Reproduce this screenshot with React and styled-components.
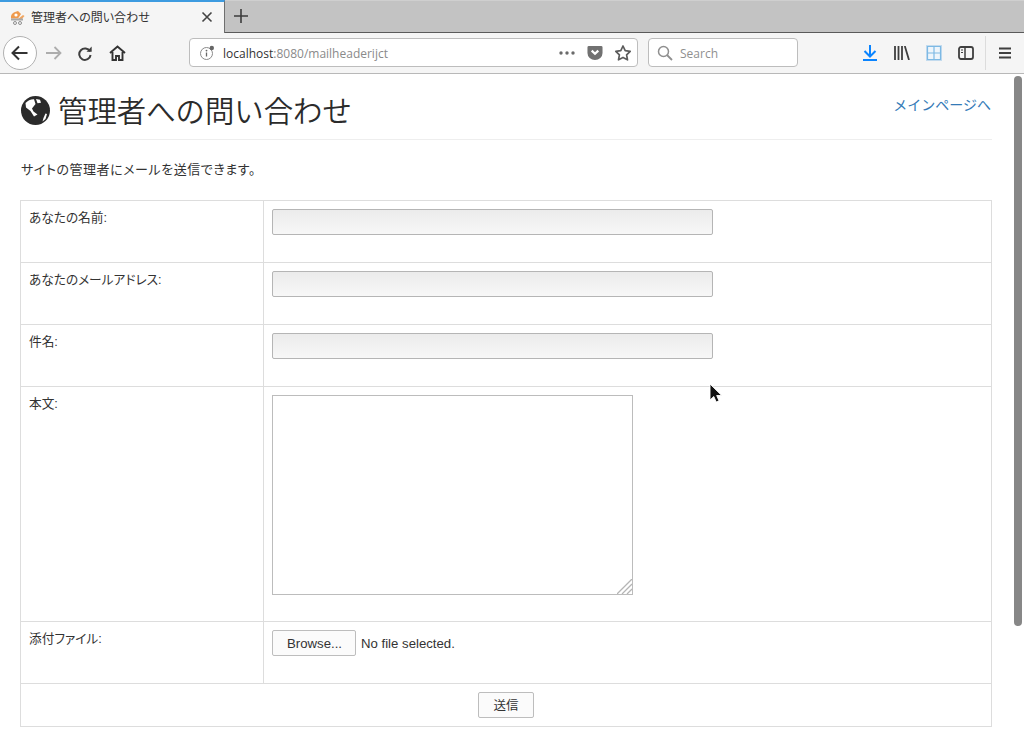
import React from "react";
import styled, { createGlobalStyle } from "styled-components";

const Global = createGlobalStyle`
  html, body { margin: 0; padding: 0; background: #fff; overflow: hidden; }
  #root { width: 1024px; height: 754px; overflow: hidden; }
  * { box-sizing: border-box; }
`;

const CJK = `"Liberation Sans", "Noto Sans CJK JP", sans-serif`;
const UI = `"Open Sans", "Noto Sans CJK JP", sans-serif`;

const Window = styled.div`
  position: relative;
  width: 1024px;
  height: 754px;
  overflow: hidden;
  display: flex;
  flex-direction: column;
`;
const TabStrip = styled.div`
  height: 33px;
  background: #c3c3c3;
  border-bottom: 1px solid #5a5a5a;
  border-top: 1px solid #cfcfcf;
  display: flex;
  align-items: stretch;
  flex: none;
`;
const Tab = styled.div`
  width: 225px;
  height: 33px;
  margin-top: -1px;
  background: #f5f5f5;
  border-top: 2px solid #3d9be0;
  border-right: 1px solid #6f6f6f;
  display: flex;
  align-items: center;
  padding: 0 11px 2px 10px;
  font: 12px ${UI};
  font-feature-settings: "palt";
  color: #333;
  position: relative;
  z-index: 1;
`;
const TabTitle = styled.span`
  margin-left: 5px;
  flex: 1;
  white-space: nowrap;
`;
const NewTab = styled.div`
  width: 32px;
  padding-bottom: 2px;
  display: flex;
  align-items: center;
  justify-content: center;
`;
const NavBar = styled.div`
  height: 41px;
  flex: none;
  background: #f5f5f5;
  border-bottom: 1px solid #b8b8b8;
  display: flex;
  align-items: center;
  padding: 0 0 1px 3px;
`;
const BackButton = styled.div`
  width: 34px;
  height: 34px;
  border-radius: 50%;
  border: 1px solid #b1b1b1;
  background: #fff;
  display: flex;
  align-items: center;
  justify-content: center;
  flex: none;
`;
const NavIcon = styled.div`
  width: ${(p) => p.$w || 32}px;
  height: 24px;
  flex: none;
  display: flex;
  align-items: center;
  justify-content: center;
`;
const UrlBar = styled.div`
  width: 449px;
  height: 29px;
  margin-left: 56px;
  flex: none;
  background: #fff;
  border: 1px solid #bdbdbd;
  border-radius: 4px;
  display: flex;
  align-items: center;
  padding: 0 5px 0 9px;
  font: 12px/17px ${UI};
`;
const UrlText = styled.span`
  margin: 2px 0 0 8px;
  flex: 1;
  color: #8a8a8a;
  white-space: nowrap;
`;
const UrlHost = styled.span`
  color: #333;
`;
const PocketIcon = styled.svg`
  margin-left: 11px;
`;
const StarIcon = styled.svg`
  margin-left: 11px;
`;
const SearchBox = styled.div`
  width: 150px;
  height: 29px;
  margin-left: 10px;
  flex: none;
  background: #fff;
  border: 1px solid #bdbdbd;
  border-radius: 4px;
  display: flex;
  align-items: center;
  padding-left: 8px;
  font: 12px/17px ${UI};
  color: #8f8f8f;
`;
const SearchLabel = styled.span`
  margin: 2px 0 0 7px;
`;
const ToolIcons = styled.div`
  margin-left: 56px;
  display: flex;
  align-items: center;
  flex: 1;
  height: 100%;
`;
const Divider = styled.div`
  width: 1px;
  height: 34px;
  background: #dcdcdc;
  margin: 0 3px 0 3px;
`;
const Page = styled.main`
  flex: 1;
  padding: 16px 32px 0 20px;
  font: 13px/1.43 ${CJK};
  font-feature-settings: "palt";
  color: #333;
  background: #fff;
`;
const Header = styled.header`
  display: flex;
  justify-content: space-between;
  align-items: flex-start;
  height: 50px;
  border-bottom: 1px solid #eee;
`;
const Title = styled.h1`
  margin: 0;
  font: 350 29.4px/44px ${CJK};
  color: #2b2b2b;
  display: flex;
  align-items: center;
  height: 44px;
`;
const TitleIcon = styled.svg`
  display: block;
  margin: -4px 8px 0 1px;
  flex: none;
`;
const HomeLink = styled.a`
  font-size: 14px;
  line-height: 20px;
  margin-top: 5px;
  margin-right: 1px;
  font-feature-settings: normal;
  color: #337ab7;
  text-decoration: none;
`;
const Lead = styled.p`
  margin: 20px 0 21px;
  padding-left: 1px;
  font-size: 13px;
  line-height: 19px;
  height: 19px;
  letter-spacing: 0.55px;
`;
const FormTable = styled.table`
  width: 972px;
  border-collapse: collapse;
  table-layout: fixed;
  font-size: 12.7px;
`;
const Row = styled.tr`
  height: ${(p) => p.$h}px;
`;
const LabelCell = styled.td`
  width: 243px;
  border: 1px solid #ddd;
  padding: 8px;
  vertical-align: top;
  line-height: 18px;
`;
const FieldCell = styled.td`
  border: 1px solid #ddd;
  padding: 8px;
  vertical-align: top;
`;
const SubmitCell = styled.td`
  border: 1px solid #ddd;
  padding: 8px;
  text-align: center;
  vertical-align: top;
`;
const TextInput = styled.input`
  display: block;
  width: 441px;
  height: 26px;
  padding: 0 6px;
  border: 1px solid #b5b5b5;
  border-radius: 2px;
  background: linear-gradient(#ebebeb, #f7f7f7);
  outline: none;
`;
const AreaWrap = styled.div`
  position: relative;
  width: 361px;
  height: 200px;
`;
const TextArea = styled.textarea`
  display: block;
  width: 361px;
  height: 200px;
  border: 1px solid #bcbcbc;
  border-radius: 0;
  background: #fff;
  outline: none;
  resize: none;
`;
const Grip = styled.svg`
  position: absolute;
  right: 1px;
  bottom: 1px;
`;
const FileRow = styled.div`
  display: flex;
  align-items: center;
  font: 13.2px "Liberation Sans", sans-serif;
`;
const BrowseButton = styled.button`
  width: 84px;
  height: 26px;
  padding: 0 0 0 1px;
  border: 1px solid #bdbdbd;
  border-radius: 2px;
  background: #fbfbfb;
  color: #333;
  font: 13.2px ${CJK};
`;
const SubmitButton = styled.button`
  width: 56px;
  height: 26px;
  padding: 0 0 2px;
  border: 1px solid #bdbdbd;
  border-radius: 2px;
  background: #fbfbfb;
  color: #333;
  font: 12.5px ${CJK};
`;
const FileStatus = styled.span`
  margin-left: 5px;
`;
const ScrollThumb = styled.div`
  position: absolute;
  left: 1014px;
  top: 76px;
  width: 8px;
  height: 550px;
  border-radius: 4px;
  background: #878787;
`;
const Cursor = styled.svg`
  position: absolute;
  left: 708px;
  top: 383px;
`;

const Stroke = { fill: "none", stroke: "#4a4a4a", strokeWidth: 1.8 };

export default function App() {
  return (
    <Window>
      <Global />
      <TabStrip>
        <Tab>
          <svg width="16" height="16" viewBox="0 0 16 16">
            <path d="M1 9.500a6 6 0 0 1 4-6.500l3-1 3 3 -3 4.500z" fill="#ef9a4e" />
            <circle cx="6" cy="6" r="1.600" fill="#fff" />
            <path d="M8 10l5-4 1.500 1-3 3.500z" fill="#f0a561" />
            <rect x="1" y="9.500" width="12" height="2" fill="#a8a8a8" />
            <circle cx="5" cy="14" r="1.500" fill="none" stroke="#8f8f8f" />
            <circle cx="10" cy="14" r="1.500" fill="none" stroke="#8f8f8f" />
          </svg>
          <TabTitle>管理者への問い合わせ</TabTitle>
          <svg width="12" height="12" viewBox="0 0 12 12">
            <path d="M1.500 1.500l9 9M10.500 1.500l-9 9" stroke="#444" strokeWidth="1.600" fill="none" />
          </svg>
        </Tab>
        <NewTab>
          <svg width="14" height="14" viewBox="0 0 14 14">
            <path d="M7 0v14M0 7h14" stroke="#3c3c3c" strokeWidth="1.600" fill="none" />
          </svg>
        </NewTab>
      </TabStrip>
      <NavBar>
        <BackButton>
          <svg width="18" height="16" viewBox="0 0 18 16">
            <path d="M1.500 8h15M8 1.500L1.500 8 8 14.500" {...Stroke} stroke="#333" strokeWidth="2" />
          </svg>
        </BackButton>
        <NavIcon $w={32}>
          <svg width="17" height="14" viewBox="0 0 17 14">
            <path d="M1 7h14M9.500 1l6 6-6 6" {...Stroke} stroke="#adadad" strokeWidth="1.800" />
          </svg>
        </NavIcon>
        <NavIcon $w={32}>
          <svg width="16" height="16" viewBox="0 0 16 16">
            <path d="M13 6.500A5.700 5.700 0 1 0 13.600 10" {...Stroke} stroke="#3f3f3f" strokeWidth="2" />
            <path d="M9.500 6.800h5.200V1.500z" fill="#3f3f3f" />
          </svg>
        </NavIcon>
        <NavIcon $w={32}>
          <svg width="17" height="16" viewBox="0 0 17 16">
            <path d="M1 8l7.500-6.500L16 8M3.500 7v8h3.500v-4h3v4h3.500V7" {...Stroke} stroke="#333" strokeWidth="1.900" />
          </svg>
        </NavIcon>
        <UrlBar>
          <svg width="16" height="16" viewBox="0 0 16 16">
            <circle cx="7.500" cy="8.500" r="6" fill="none" stroke="#8a8a8a" />
            <path d="M7.500 7.500v4" stroke="#666" strokeWidth="1.300" />
            <circle cx="7.500" cy="5.600" r=".9" fill="#666" />
            <circle cx="12.800" cy="3" r="2.200" fill="#666" />
          </svg>
          <UrlText>
            <UrlHost>localhost</UrlHost>:8080/mailheaderijct
          </UrlText>
          <svg width="18" height="16" viewBox="0 0 18 16">
            <circle cx="3" cy="8" r="1.700" fill="#6a6a6a" />
            <circle cx="9" cy="8" r="1.700" fill="#6a6a6a" />
            <circle cx="15" cy="8" r="1.700" fill="#6a6a6a" />
          </svg>
          <PocketIcon width="16" height="16" viewBox="0 0 17 16">
            <path d="M2 .5h13A1.500 1.500 0 0 1 16.500 2v6a8 7.500 0 0 1-16 0V2A1.500 1.500 0 0 1 2 .5z" fill="#717171" />
            <path d="M5 5.500l3.500 3.300L12 5.500" fill="none" stroke="#fff" strokeWidth="2.400" />
          </PocketIcon>
          <StarIcon width="18" height="18" viewBox="0 0 18 18">
            <path d="M9 2l2.200 4.600 5 .7-3.600 3.500.9 5L9 13.400l-4.500 2.400.9-5L1.800 7.300l5-.7z" fill="none" stroke="#5c5c5c" strokeWidth="1.700" strokeLinejoin="round" />
          </StarIcon>
        </UrlBar>
        <SearchBox>
          <svg width="16" height="16" viewBox="0 0 16 16">
            <circle cx="6.500" cy="6.500" r="5" fill="none" stroke="#8f8f8f" strokeWidth="1.500" />
            <path d="M10 10l5 5" stroke="#8f8f8f" strokeWidth="1.800" />
          </svg>
          <SearchLabel>Search</SearchLabel>
        </SearchBox>
        <ToolIcons>
          <NavIcon $w={32}>
            <svg width="14" height="16" viewBox="0 0 14 16">
              <path d="M7 0v11M1.500 6L7 11.500 12.500 6" fill="none" stroke="#0a84ff" strokeWidth="2" />
              <path d="M0 15h14" stroke="#0a84ff" strokeWidth="2" />
            </svg>
          </NavIcon>
          <NavIcon $w={32}>
            <svg width="16" height="14" viewBox="0 0 16 14">
              <path d="M1 0v14M4.500 0v14M8 0v14M10.800 0l4.200 14" fill="none" stroke="#3f3f3f" strokeWidth="1.800" />
            </svg>
          </NavIcon>
          <NavIcon $w={32}>
            <svg width="16" height="16" viewBox="0 0 16 16">
              <rect x=".5" y=".5" width="15" height="15" fill="#dbe9f5" stroke="#c3dbee" />
              <path d="M1.500 1.500h13v13h-13zM8 1.500v13M1.500 8h13" fill="#eef5fb" stroke="#7db9e4" strokeWidth="1.200" />
            </svg>
          </NavIcon>
          <NavIcon $w={32}>
            <svg width="16" height="14" viewBox="0 0 16 14">
              <rect x="1" y="1" width="14" height="12" rx="2" fill="none" stroke="#3f3f3f" strokeWidth="1.800" />
              <path d="M7 1v12" stroke="#3f3f3f" strokeWidth="1.500" />
              <path d="M3 4h2M3 6.500h2" stroke="#3f3f3f" strokeWidth="1" />
            </svg>
          </NavIcon>
          <Divider />
          <NavIcon $w={32}>
            <svg width="14" height="12" viewBox="0 0 14 12">
              <path d="M1 1.500h12M1 6h12M1 10.500h12" stroke="#3f3f3f" strokeWidth="1.800" />
            </svg>
          </NavIcon>
        </ToolIcons>
      </NavBar>
      <Page>
        <Header>
          <Title>
            <TitleIcon width="29" height="29" viewBox="0 0 29 29">
              <circle cx="14.500" cy="14.500" r="14.500" fill="#2b2b2b" />
              <path d="M4.500 7Q8 3 13 3.200L14.500 8 11 12.500l1.500 3 4 3-3.500 2-3.500-5.500-4.500-3.500z" fill="#fff" />
              <path d="M15 3l4 .8 1 3-3.500.5z" fill="#fff" />
              <path d="M24.500 17.500l1.500.5-1.500 5-3 2.500 1-3.500z" fill="#fff" />
            </TitleIcon>
            管理者への問い合わせ
          </Title>
          <HomeLink href="#">メインページへ</HomeLink>
        </Header>
        <Lead>サイトの管理者にメールを送信できます。</Lead>
        <form>
          <FormTable>
            <tbody>
              <Row $h={62}>
                <LabelCell>あなたの名前:</LabelCell>
                <FieldCell><TextInput type="text" /></FieldCell>
              </Row>
              <Row $h={62}>
                <LabelCell>あなたのメールアドレス:</LabelCell>
                <FieldCell><TextInput type="text" /></FieldCell>
              </Row>
              <Row $h={62}>
                <LabelCell>件名:</LabelCell>
                <FieldCell><TextInput type="text" /></FieldCell>
              </Row>
              <Row $h={235}>
                <LabelCell>本文:</LabelCell>
                <FieldCell>
                  <AreaWrap>
                    <TextArea />
                    <Grip width="15" height="15" viewBox="0 0 15 15">
                      <path d="M0 15L15 0M5 15L15 5M10 15l5-5" stroke="#b5b5b5" strokeWidth="1.300" fill="none" />
                    </Grip>
                  </AreaWrap>
                </FieldCell>
              </Row>
              <Row $h={62}>
                <LabelCell>添付ファイル:</LabelCell>
                <FieldCell>
                  <FileRow>
                    <BrowseButton type="button">Browse...</BrowseButton>
                    <FileStatus>No file selected.</FileStatus>
                  </FileRow>
                </FieldCell>
              </Row>
              <Row $h={43}>
                <SubmitCell colSpan={2}>
                  <SubmitButton type="button">送信</SubmitButton>
                </SubmitCell>
              </Row>
            </tbody>
          </FormTable>
        </form>
      </Page>
      <ScrollThumb />
      <Cursor width="16" height="22" viewBox="0 0 16 22">
        <path d="M2 1v16l3.800-3.500 2.400 5.500 2.800-1.200-2.300-5.300h5z" fill="#111" stroke="#fff" strokeWidth=".9" />
      </Cursor>
    </Window>
  );
}
